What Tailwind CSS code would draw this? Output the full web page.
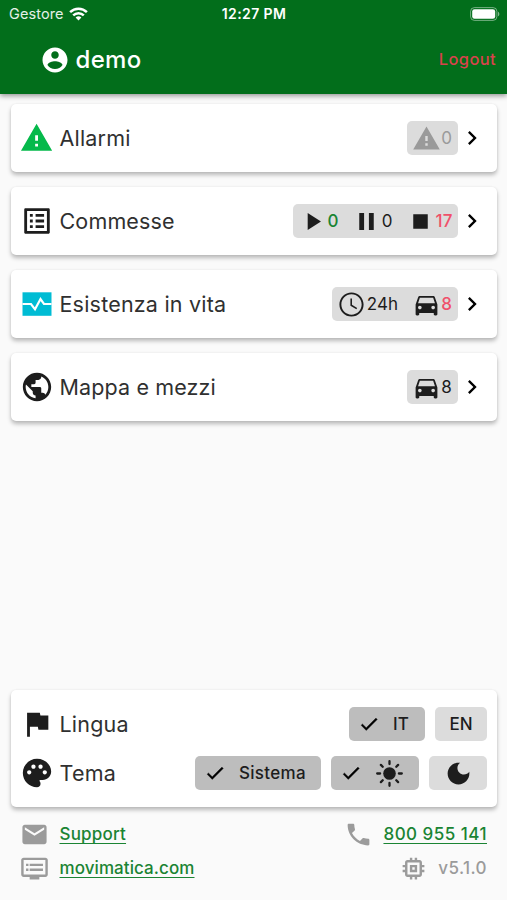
<!DOCTYPE html>
<html lang="it">
<head>
<meta charset="utf-8">
<title>Gestore</title>
<script src="https://cdn.jsdelivr.net/npm/@tailwindcss/browser@4"></script>
</head>
<body class="bg-[#fafafa]">
<svg class="hidden">
  <symbol id="warn" viewBox="0 0 24 24"><path d="M1 21h22L12 2 1 21zm12-3h-2v-2h2v2zm0-4h-2v-4h2v4z"/></symbol>
  <symbol id="chev" viewBox="0 0 24 24"><path d="M10 6 8.590 7.410 13.170 12l-4.580 4.590L10 18l6-6z"/></symbol>
  <symbol id="car" viewBox="0 0 24 24"><path d="M18.920 6.010C18.720 5.420 18.160 5 17.500 5h-11c-.66 0-1.210.42-1.420 1.010L3 12v8c0 .55.45 1 1 1h1c.55 0 1-.45 1-1v-1h12v1c0 .55.45 1 1 1h1c.55 0 1-.45 1-1v-8l-2.080-5.990zM6.500 16c-.83 0-1.500-.67-1.500-1.500S5.670 13 6.500 13s1.500.67 1.500 1.500S7.330 16 6.500 16zm11 0c-.83 0-1.500-.67-1.500-1.500s.67-1.500 1.500-1.500 1.500.67 1.500 1.500-.67 1.500-1.500 1.500zM5 11l1.500-4.500h11L19 11H5z"/></symbol>
  <symbol id="check" viewBox="0 0 24 24"><path d="M9 16.170 4.830 12l-1.420 1.410L9 19 21 7l-1.410-1.410z" stroke="#1d1d1d" stroke-width=".5"/></symbol>
</svg>
<div class="flex h-[900px] w-[507px] flex-col overflow-hidden font-[Inter,'Liberation_Sans',sans-serif] text-[#1d1d1d]">
  <header class="relative h-[94px] shrink-0 bg-[#026e1b] text-white shadow-[0_2px_5px_rgba(0,0,0,0.4)]">
    <div class="grid h-[27px] grid-cols-3 items-center pr-[7px] pl-[9px]">
      <div class="flex items-center gap-[5.500px]">
        <span class="pt-[2px] text-[14.500px] leading-none tracking-[0.100px] text-white/90">Gestore</span>
        <svg class="h-[14px] w-[19px]" viewBox="0 0 19 14" fill="none" stroke="#fff" stroke-width="2.500"><path d="M1.100 5.100a12 12 0 0 1 16.800 0M4.200 8.400a7.600 7.600 0 0 1 10.600 0"/><path d="M9.500 13.500 6.600 10.600a4.200 4.200 0 0 1 5.800 0z" fill="#fff" stroke="none"/></svg>
      </div>
      <span class="-ml-[1px] text-center text-[14px] leading-none font-semibold tracking-[0.400px] whitespace-nowrap">12:27 PM</span>
      <svg class="h-[14px] w-[30px] justify-self-end" viewBox="0 0 30 14"><rect x=".6" y=".6" width="26.300" height="12.800" rx="3.800" fill="none" stroke="#fff" stroke-opacity=".45"/><rect x="2.200" y="2.200" width="23" height="9.600" rx="2.300" fill="#fff"/><path d="M28 4.700c1.800.6 1.800 4 0 4.600z" fill="#fff" fill-opacity=".5"/></svg>
    </div>
    <div class="flex h-[65px] items-center pr-[11px] pl-[39.500px]">
      <svg class="size-[30px]" viewBox="0 0 24 24" fill="#fff"><path d="M12 2C6.480 2 2 6.480 2 12s4.480 10 10 10 10-4.480 10-10S17.520 2 12 2zm0 3c1.660 0 3 1.340 3 3s-1.340 3-3 3-3-1.340-3-3 1.340-3 3-3zm0 14.200c-2.500 0-4.710-1.280-6-3.220.03-1.990 4-3.080 6-3.080 1.990 0 5.970 1.090 6 3.080-1.290 1.940-3.500 3.220-6 3.220z"/></svg>
      <h1 class="ml-[6px] text-[24px] leading-none font-medium tracking-[0.300px]">demo</h1>
      <span class="ml-auto text-[16.500px] leading-none font-medium tracking-[0.350px] text-[#d8434c]">Logout</span>
    </div>
  </header>

  <main class="flex grow flex-col pt-[10px] pr-[10px] pl-[10.500px]">
    <div class="flex flex-col gap-[15px]">
      <section class="flex h-[68px] items-center rounded-[5px] bg-white pr-[11px] pl-[9.500px] shadow-[0_3px_4px_rgba(0,0,0,0.26),0_0_2px_rgba(0,0,0,0.08)]">
        <svg class="size-[34px]" viewBox="0.300 0 24 24" fill="#05b94b"><use href="#warn" width="24" height="24"/></svg>
        <span class="ml-[5.500px] text-[21.500px] tracking-[0.200px] text-[#303030]">Allarmi</span>
        <div class="ml-auto flex h-[34px] items-center rounded-[5px] bg-[#dcdcdc] px-[5px] text-[17px] text-[#9a9a9a]">
          <svg class="size-[29px]" fill="#9a9a9a"><use href="#warn"/></svg><span class="w-[12px] pt-[1px] pr-[1px] text-center leading-none">0</span>
        </div>
        <svg class="size-[28px]"><use href="#chev"/></svg>
      </section>

      <section class="flex h-[68px] items-center rounded-[5px] bg-white pr-[11px] pl-[9.500px] shadow-[0_3px_4px_rgba(0,0,0,0.26),0_0_2px_rgba(0,0,0,0.08)]">
        <svg class="size-[34px]" viewBox="0 0 24 24" fill="#1d1d1d"><path d="M11 7h6v2h-6zm0 4h6v2h-6zm0 4h6v2h-6zM7 7h2v2H7zm0 4h2v2H7zm0 4h2v2H7zM20.100 3H3.900c-.5 0-.9.4-.9.9v16.200c0 .4.4.9.9.9h16.200c.4 0 .9-.5.9-.9V3.900c0-.5-.5-.9-.9-.9zM19 19H5V5h14v14z"/></svg>
        <span class="ml-[5.500px] text-[21.500px] tracking-[0.150px] text-[#303030]">Commesse</span>
        <div class="ml-auto flex h-[34px] items-center gap-[13px] rounded-[5px] bg-[#dcdcdc] px-[5px] text-[17px] leading-none">
          <div class="flex items-center"><svg class="size-[29px]" viewBox="0 0 24 24" fill="#1d1d1d"><path d="M8 5v14l11-7z"/></svg><span class="w-[12px] pt-[1px] text-center font-medium text-[#1a8433]">0</span></div>
          <div class="flex items-center"><svg class="size-[29px]" viewBox="0 0 24 24" fill="#1d1d1d"><path d="M6 19h4V5H6v14zm8-14v14h4V5h-4z"/></svg><span class="w-[12px] pt-[1px] text-center">0</span></div>
          <div class="flex items-center"><svg class="size-[29px]" viewBox="0 0 24 24" fill="#1d1d1d"><path d="M6 6h12v12H6z"/></svg><span class="w-[18px] pt-[1px] text-center font-medium text-[#f0506a]">17</span></div>
        </div>
        <svg class="size-[28px]"><use href="#chev"/></svg>
      </section>

      <section class="flex h-[68px] items-center rounded-[5px] bg-white pr-[11px] pl-[9.500px] shadow-[0_3px_4px_rgba(0,0,0,0.26),0_0_2px_rgba(0,0,0,0.08)]">
        <svg class="size-[34px]" viewBox="0 0 34 34"><path d="M2.500 5.300h29v23.500h-29z" fill="#00bcd4"/><path d="M2.500 17H11l4 5.300 5.500-10.300 3.500 5h7.500" fill="none" stroke="#fff" stroke-width="2.200"/></svg>
        <span class="ml-[5.500px] text-[21.500px] tracking-[0.200px] text-[#303030]">Esistenza in vita</span>
        <div class="ml-auto flex h-[34px] items-center gap-[13px] rounded-[5px] bg-[#dcdcdc] px-[5px] text-[17px] leading-none">
          <div class="flex items-center"><svg class="size-[29px]" viewBox="0 0 24 24" fill="#1d1d1d"><path d="M11.990 2C6.470 2 2 6.480 2 12s4.470 10 9.990 10C17.520 22 22 17.520 22 12S17.520 2 11.990 2zM12 20.400c-4.640 0-8.400-3.760-8.400-8.400S7.360 3.600 12 3.600s8.400 3.760 8.400 8.400-3.760 8.400-8.400 8.400zM12.400 7H11.100v6l4.900 3 .7-1.150-4.300-2.550z"/></svg><span class="w-[33px] pt-[1px] text-center tracking-[0.200px]">24h</span></div>
          <div class="flex items-center"><svg class="size-[29px]" fill="#1d1d1d"><use href="#car"/></svg><span class="w-[12px] pt-[1px] pr-[1px] text-center font-medium text-[#f0506a]">8</span></div>
        </div>
        <svg class="size-[28px]"><use href="#chev"/></svg>
      </section>

      <section class="flex h-[68px] items-center rounded-[5px] bg-white pr-[11px] pl-[9.500px] shadow-[0_3px_4px_rgba(0,0,0,0.26),0_0_2px_rgba(0,0,0,0.08)]">
        <svg class="size-[34px]" viewBox="0 0 24 24" fill="#1d1d1d"><path d="M12 2C6.480 2 2 6.480 2 12s4.480 10 10 10 10-4.480 10-10S17.520 2 12 2zm-1 17.930c-3.950-.49-7-3.850-7-7.930 0-.62.08-1.210.21-1.790L9 15v1c0 1.100.9 2 2 2v1.930zm6.900-2.540c-.26-.81-1-1.390-1.900-1.390h-1v-3c0-.55-.45-1-1-1H8v-2h2c.55 0 1-.45 1-1V7h2c1.100 0 2-.9 2-2v-.41c2.930 1.190 5 4.060 5 7.410 0 2.080-.8 3.970-2.100 5.390z"/></svg>
        <span class="ml-[5.500px] text-[21.500px] tracking-[0.130px] text-[#303030]">Mappa e mezzi</span>
        <div class="ml-auto flex h-[34px] items-center rounded-[5px] bg-[#dcdcdc] px-[5px] text-[17px] leading-none">
          <svg class="size-[29px]" fill="#1d1d1d"><use href="#car"/></svg><span class="w-[12px] pt-[1px] pr-[1px] text-center">8</span>
        </div>
        <svg class="size-[28px]"><use href="#chev"/></svg>
      </section>
    </div>

    <section class="mt-auto flex h-[117px] shrink-0 flex-col justify-center gap-[15px] rounded-[5px] bg-white pr-[10px] pl-[9.500px] shadow-[0_3px_4px_rgba(0,0,0,0.26),0_0_2px_rgba(0,0,0,0.08)]">
      <div class="flex h-[34px] items-center">
        <svg class="size-[34px]" viewBox="0 0 24 24" fill="#1d1d1d"><path d="M14.400 6 14 4H5v17h2v-7h5.600l.4 2h7V6z"/></svg>
        <span class="ml-[5.500px] text-[21.500px] tracking-[0.200px] text-[#303030]">Lingua</span>
        <div class="ml-auto flex gap-[10px] text-[17px] leading-none font-medium">
          <div class="flex h-[34px] w-[76px] items-center rounded-[5px] bg-[#bdbdbd] pl-[9px]"><svg class="size-[22px]"><use href="#check"/></svg><span class="ml-[13px] pt-[1px]">IT</span></div>
          <div class="flex h-[34px] w-[52px] items-center justify-center rounded-[5px] bg-[#dcdcdc]"><span class="pt-[1px]">EN</span></div>
        </div>
      </div>
      <div class="flex h-[34px] items-center">
        <svg class="size-[34px]" viewBox="0 0 24 24" fill="#1d1d1d"><path d="M12 2C6.490 2 2 6.490 2 12s4.490 10 10 10c1.380 0 2.500-1.120 2.500-2.500 0-.61-.23-1.200-.64-1.670-.08-.1-.13-.21-.13-.33 0-.28.22-.5.5-.5H16c3.310 0 6-2.690 6-6 0-4.960-4.490-9-10-9zm5.500 11c-.83 0-1.500-.67-1.500-1.500s.67-1.500 1.500-1.500 1.500.67 1.500 1.500-.67 1.500-1.500 1.500zm-3-4c-.83 0-1.500-.67-1.500-1.500S13.670 6 14.500 6s1.500.67 1.500 1.500S15.330 9 14.500 9zM5 11.500c0-.83.67-1.500 1.500-1.500s1.500.67 1.500 1.500S7.330 13 6.500 13 5 12.330 5 11.500zm6-4c0 .83-.67 1.500-1.500 1.500S8 8.330 8 7.500 8.670 6 9.500 6s1.500.67 1.500 1.500z"/></svg>
        <span class="ml-[5.500px] text-[21.500px] tracking-[0.200px] text-[#303030]">Tema</span>
        <div class="ml-auto flex gap-[10px] text-[17px] leading-none font-medium">
          <div class="flex h-[34px] w-[126px] items-center rounded-[5px] bg-[#bdbdbd] pl-[9px]"><svg class="size-[22px]"><use href="#check"/></svg><span class="ml-[13px] pt-[1px] tracking-[0.300px]">Sistema</span></div>
          <div class="flex h-[34px] w-[88px] items-center rounded-[5px] bg-[#bdbdbd] pl-[9px]"><svg class="size-[22px]"><use href="#check"/></svg>
            <svg class="ml-[13px] size-[29px]" viewBox="0 0 29 29"><circle cx="14.500" cy="14.500" r="6.300" fill="#1d1d1d"/><path d="M14.500 2.200v2.900m0 18.800v2.900M2.200 14.500h2.900m18.800 0h2.900M5.900 5.900l1.800 1.800m13.600 13.600 1.800 1.800m0-17.200-1.800 1.800M7.700 21.300l-1.800 1.800" stroke="#1d1d1d" stroke-width="2.300" stroke-linecap="round"/></svg></div>
          <div class="flex h-[34px] w-[58px] items-center justify-center rounded-[5px] bg-[#dcdcdc]"><svg class="size-[29px]" viewBox="0 0 24 24"><path d="M12 3c-4.970 0-9 4.030-9 9s4.030 9 9 9 9-4.030 9-9c0-.46-.04-.92-.1-1.360-.98 1.370-2.580 2.260-4.400 2.260-2.980 0-5.400-2.420-5.400-5.400 0-1.810.89-3.420 2.260-4.400C12.920 3.040 12.460 3 12 3z" fill="#1d1d1d"/></svg></div>
        </div>
      </div>
    </section>

    <footer class="flex h-[93px] shrink-0 flex-col pt-[10px] pr-[10px] pl-[9.500px] text-[17px] leading-[22px] font-medium">
      <div class="flex h-[34px] items-center">
        <svg class="size-[29px]" viewBox="0 0 24 24" fill="#9b9b9b"><path d="M20 4H4c-1.100 0-1.990.9-1.990 2L2 18c0 1.100.9 2 2 2h16c1.100 0 2-.9 2-2V6c0-1.100-.9-2-2-2zm0 4-8 5-8-5V6l8 5 8-5v2z"/></svg>
        <span class="ml-[10.500px] tracking-[0.200px] text-[#1a8433] underline decoration-[1.300px] underline-offset-[3px]">Support</span>
        <svg class="ml-auto size-[29px]" viewBox="0 0 24 24" fill="#9b9b9b"><path d="M6.620 10.790c1.440 2.830 3.760 5.140 6.590 6.590l2.200-2.200c.27-.27.67-.36 1.020-.24 1.120.37 2.330.57 3.570.57.55 0 1 .45 1 1V20c0 .55-.45 1-1 1-9.390 0-17-7.610-17-17 0-.55.45-1 1-1h3.500c.55 0 1 .45 1 1 0 1.250.2 2.450.57 3.570.11.35.03.74-.25 1.020l-2.200 2.200z"/></svg>
        <span class="ml-[10px] tracking-[0.480px] text-[#1a8433] underline decoration-[1.300px] underline-offset-[3px]">800 955 141</span>
      </div>
      <div class="flex h-[34px] items-center">
        <svg class="size-[29px]" viewBox="0 0 24 24" fill="#9b9b9b"><path d="M21 3H3c-1.100 0-2 .9-2 2v12c0 1.100.9 2 2 2h5v2h8v-2h5c1.100 0 1.990-.9 1.990-2L23 5c0-1.100-.9-2-2-2zm0 14H3V5h18v12zm-2-9H8v2h11V8zm0 4H8v2h11v-2zM7 8H5v2h2V8zm0 4H5v2h2v-2z"/></svg>
        <span class="ml-[10.500px] tracking-[0.080px] text-[#1a8433] underline decoration-[1.300px] underline-offset-[3px]">movimatica.com</span>
        <svg class="ml-auto size-[29px]" viewBox="0 0 24 24" fill="#9b9b9b"><path d="M15 9H9v6h6V9zm-2 4h-2v-2h2v2zm8-2V9h-2V7c0-1.100-.9-2-2-2h-2V3h-2v2h-2V3H9v2H7c-1.100 0-2 .9-2 2v2H3v2h2v2H3v2h2v2c0 1.100.9 2 2 2h2v2h2v-2h2v2h2v-2h2c1.100 0 2-.9 2-2v-2h2v-2h-2v-2h2zm-4 6H7V7h10v10z"/></svg>
        <span class="ml-[10px] tracking-[0.400px] text-[#9b9b9b]">v5.1.0</span>
      </div>
    </footer>
  </main>
</div>
</body>
</html>
